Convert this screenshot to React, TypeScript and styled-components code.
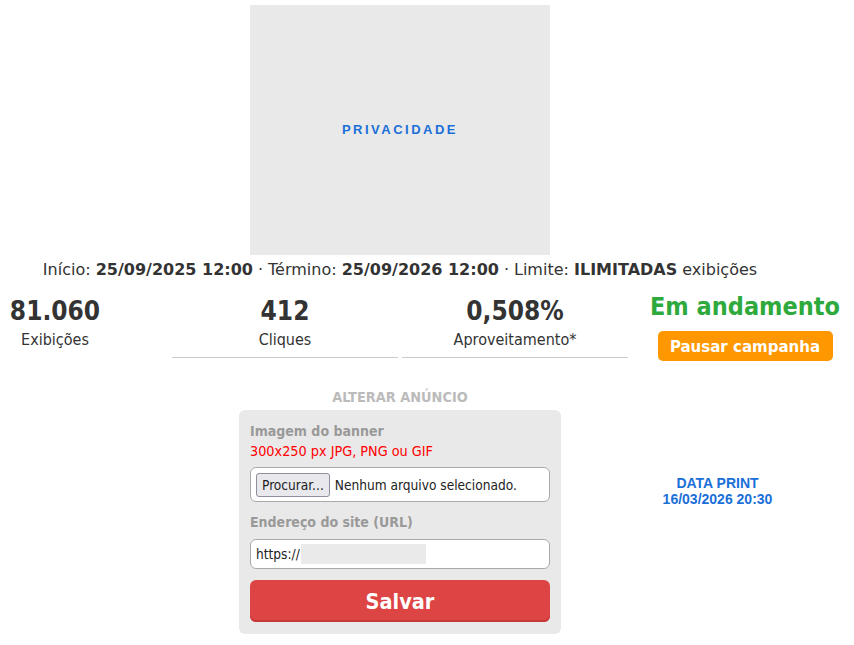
import React from "react";
import styled, { createGlobalStyle } from "styled-components";

const Global = createGlobalStyle`
  html, body { margin: 0; padding: 0; background: #fff; }
  body {
    font-family: "DejaVu Sans Condensed", "DejaVu Sans", sans-serif;
    color: #333;
    overflow: hidden;
  }
`;

const Page = styled.div`
  width: 800px;
  height: 645px;
  display: flex;
  flex-direction: column;
  align-items: center;
  padding-top: 5px;
  box-sizing: border-box;
`;

const Banner = styled.div`
  width: 300px;
  height: 250px;
  flex-shrink: 0;
  background: #e9e9e9;
  display: flex;
  align-items: center;
  justify-content: center;
  font-family: "Liberation Sans", Arial, sans-serif;
  font-weight: bold;
  font-size: 13px;
  letter-spacing: 2.5px;
  color: #1a6fd8;
  padding-bottom: 2px;
  box-sizing: border-box;
`;

const InfoLine = styled.div`
  margin-top: 5px;
  font-family: "DejaVu Sans", sans-serif;
  font-size: 16px;
  line-height: 20px;
  color: #333;
  white-space: nowrap;
  b { font-weight: bold; }
`;

const Sep = styled.span`
  margin: 0 5px;
`;

const StatsRow = styled.div`
  flex-shrink: 0;
  margin-top: 14px;
  display: grid;
  grid-template-columns: repeat(4, 226px);
  column-gap: 4px;
  align-items: start;
`;

const Stat = styled.div<{ $line?: boolean }>`
  display: flex;
  flex-direction: column;
  align-items: center;
  height: 64px;
  box-sizing: border-box;
  border-bottom: 1px solid ${(p) => (p.$line ? "#ccc" : "transparent")};
`;

const StatusStat = styled.div`
  display: flex;
  flex-direction: column;
  align-items: center;
  margin-top: -4px;
`;

const Number = styled.div`
  font-size: 26px;
  font-weight: bold;
  line-height: 35px;
  color: #333;
`;

const Label = styled.div`
  font-size: 16px;
  line-height: 22px;
  color: #333;
`;

const Status = styled.div`
  font-size: 25px;
  font-weight: bold;
  line-height: 34px;
  color: #2eaa3c;
`;

const PauseButton = styled.button`
  margin-top: 7px;
  flex-shrink: 0;
  width: 175px;
  height: 30px;
  background: #ff9800;
  color: #fff;
  border: none;
  border-radius: 5px;
  padding: 0;
  font-family: inherit;
  font-size: 16.7px;
  font-weight: bold;
`;

const Bottom = styled.div`
  align-self: stretch;
  display: grid;
  grid-template-columns: 1fr 322px 1fr;
  margin-top: 26px;
`;

const FormCol = styled.div`
  grid-column: 2;
  display: flex;
  flex-direction: column;
  align-items: center;
`;

const SectionTitle = styled.div`
  font-size: 14.4px;
  font-weight: bold;
  color: #bbb;
  line-height: 20px;
  margin-bottom: 3px;
`;

const FormBox = styled.div`
  width: 322px;
  box-sizing: border-box;
  background: #e9e9e9;
  border-radius: 6px;
  padding: 11px 11px 12px;
  display: flex;
  flex-direction: column;
`;

const FieldTitle = styled.div<{ $mt?: number }>`
  margin-top: ${(p) => p.$mt ?? 0}px;
  font-size: 14px;
  font-weight: bold;
  color: #999;
  line-height: 20px;
`;

const Hint = styled.div`
  font-size: 14.3px;
  color: #f00;
  line-height: 20px;
`;

const InputBox = styled.div<{ $h: number; $mt: number }>`
  height: ${(p) => p.$h}px;
  margin-top: ${(p) => p.$mt}px;
  box-sizing: border-box;
  background: #fff;
  border: 1px solid #aaa;
  border-radius: 6px;
  display: flex;
  align-items: center;
  padding: 0 5px;
  font-size: 13.6px;
  color: #222;
  white-space: nowrap;
`;

const FileBtn = styled.span`
  height: 24px;
  box-sizing: border-box;
  border: 1px solid #8f8f9d;
  border-radius: 3px;
  background: #e9e9ed;
  padding: 0 5px;
  display: flex;
  align-items: center;
  margin-right: 5px;
`;

const Redacted = styled.span`
  display: inline-block;
  width: 125px;
  height: 20px;
  margin-left: 1px;
  background: #eaeaea;
`;

const SaveButton = styled.button`
  margin-top: 11px;
  height: 42px;
  border: none;
  border-radius: 6px;
  background: #dd4444;
  box-shadow: inset 0 -2px 0 #c73a3a;
  color: #fff;
  font-family: inherit;
  font-size: 21.5px;
  font-weight: bold;
`;

const PrintCol = styled.div`
  grid-column: 3;
  padding-left: 74px;
  padding-top: 88px;
  display: flex;
  flex-direction: column;
  align-items: center;
  font-family: "Liberation Sans", Arial, sans-serif;
  font-weight: bold;
  font-size: 14px;
  line-height: 16px;
  color: #1a6fd8;
  white-space: nowrap;
`;

export default function App() {
  return (
    <>
      <Global />
      <Page>
        <Banner>PRIVACIDADE</Banner>
        <InfoLine>
          Início: <b>25/09/2025 12:00</b>
          <Sep>·</Sep>Término: <b>25/09/2026 12:00</b>
          <Sep>·</Sep>Limite: <b>ILIMITADAS</b> exibições
        </InfoLine>
        <StatsRow>
          <Stat>
            <Number>81.060</Number>
            <Label>Exibições</Label>
          </Stat>
          <Stat $line>
            <Number>412</Number>
            <Label>Cliques</Label>
          </Stat>
          <Stat $line>
            <Number>0,508%</Number>
            <Label>Aproveitamento*</Label>
          </Stat>
          <StatusStat>
            <Status>Em andamento</Status>
            <PauseButton>Pausar campanha</PauseButton>
          </StatusStat>
        </StatsRow>
        <Bottom>
          <FormCol>
            <SectionTitle>ALTERAR ANÚNCIO</SectionTitle>
            <FormBox>
              <FieldTitle>Imagem do banner</FieldTitle>
              <Hint>300x250 px JPG, PNG ou GIF</Hint>
              <InputBox $h={35} $mt={6}>
                <FileBtn>Procurar...</FileBtn>
                Nenhum arquivo selecionado.
              </InputBox>
              <FieldTitle $mt={10}>Endereço do site (URL)</FieldTitle>
              <InputBox $h={30} $mt={7}>
                https://<Redacted />
              </InputBox>
              <SaveButton>Salvar</SaveButton>
            </FormBox>
          </FormCol>
          <PrintCol>
            <span>DATA PRINT</span>
            <span>16/03/2026 20:30</span>
          </PrintCol>
        </Bottom>
      </Page>
    </>
  );
}
